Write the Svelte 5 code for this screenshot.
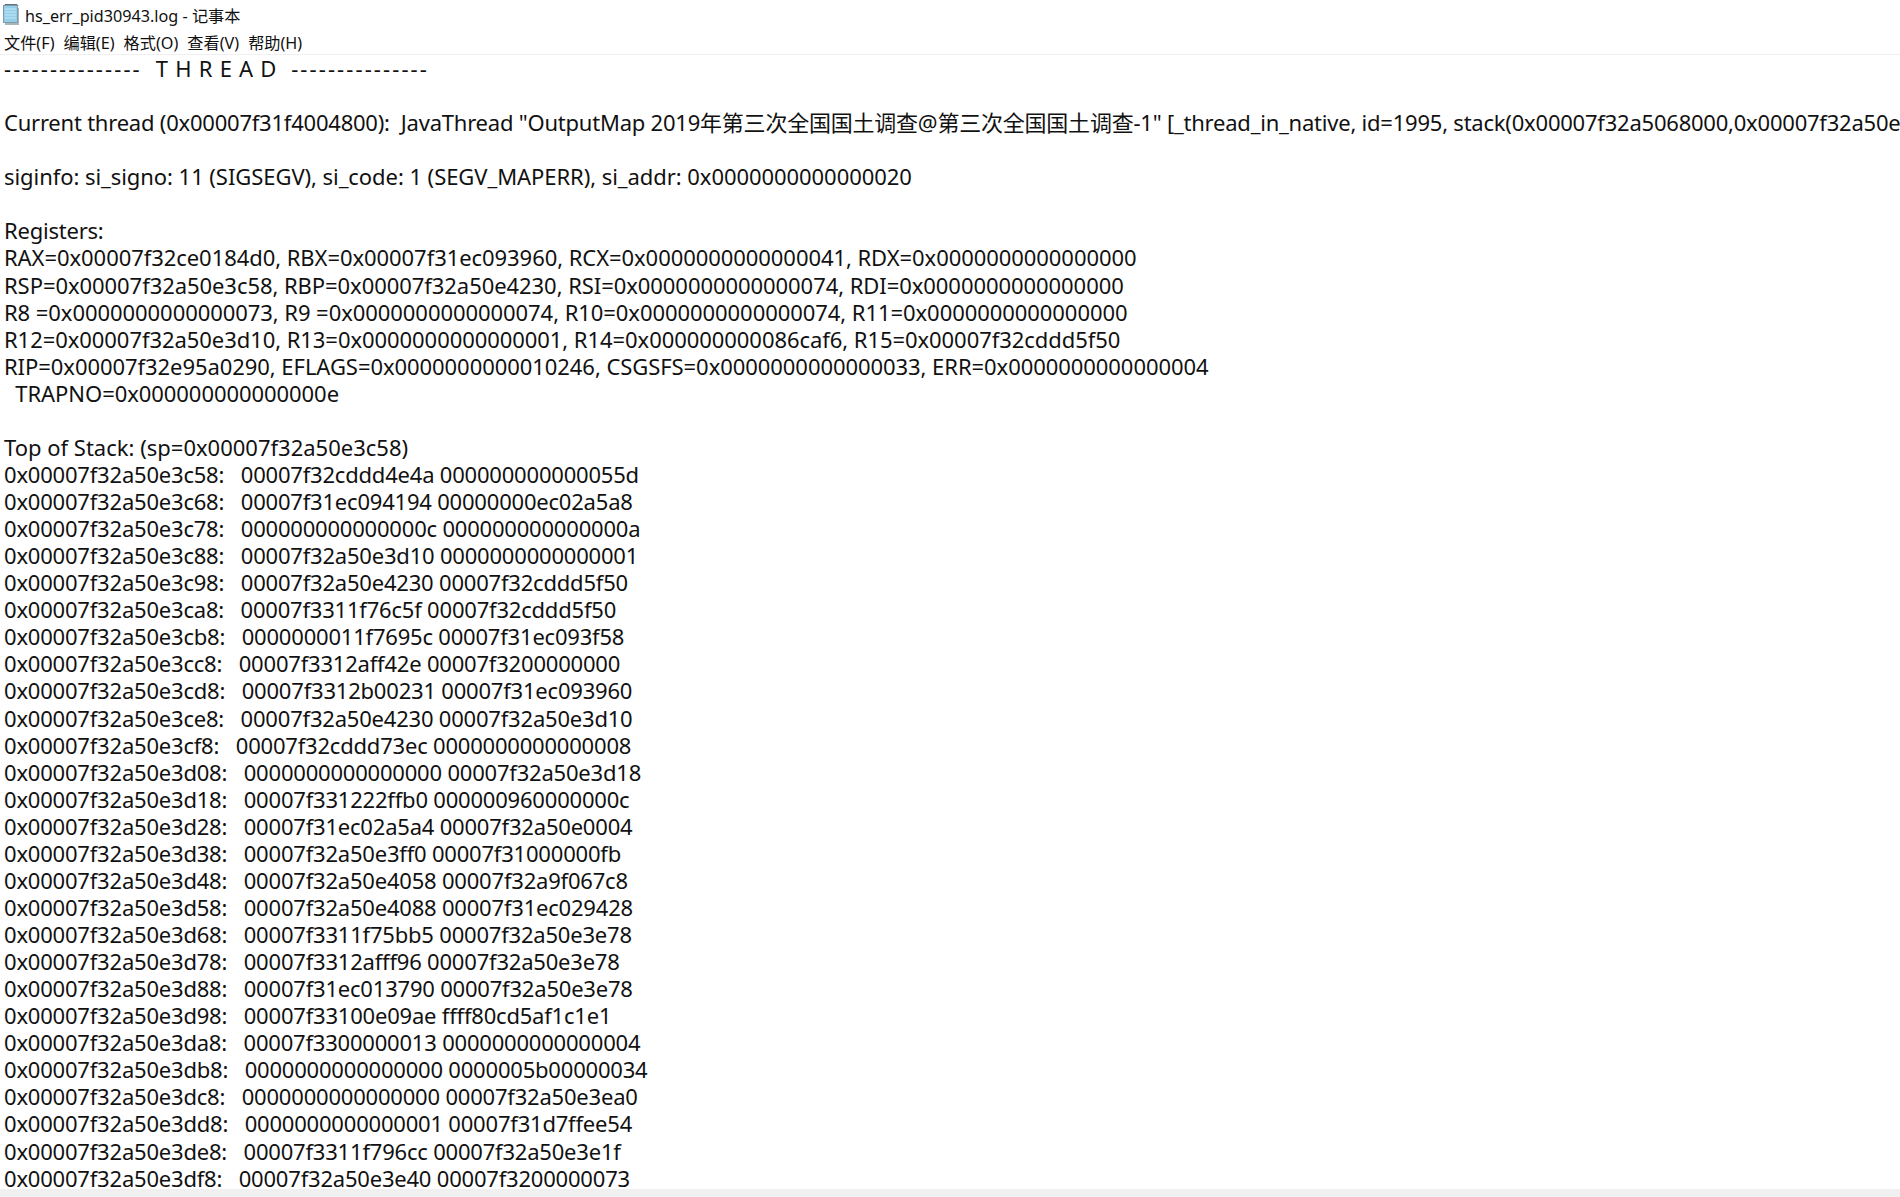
<script lang="ts">
    const registers = [
        'RAX=0x00007f32ce0184d0, RBX=0x00007f31ec093960, RCX=0x0000000000000041, RDX=0x0000000000000000',
        'RSP=0x00007f32a50e3c58, RBP=0x00007f32a50e4230, RSI=0x0000000000000074, RDI=0x0000000000000000',
        'R8 =0x0000000000000073, R9 =0x0000000000000074, R10=0x0000000000000074, R11=0x0000000000000000',
        'R12=0x00007f32a50e3d10, R13=0x0000000000000001, R14=0x000000000086caf6, R15=0x00007f32cddd5f50',
        'RIP=0x00007f32e95a0290, EFLAGS=0x0000000000010246, CSGSFS=0x0000000000000033, ERR=0x0000000000000004',
        '  TRAPNO=0x000000000000000e'
    ];

    const stack = [
        '0x00007f32a50e3c58:   00007f32cddd4e4a 000000000000055d',
        '0x00007f32a50e3c68:   00007f31ec094194 00000000ec02a5a8',
        '0x00007f32a50e3c78:   000000000000000c 000000000000000a',
        '0x00007f32a50e3c88:   00007f32a50e3d10 0000000000000001',
        '0x00007f32a50e3c98:   00007f32a50e4230 00007f32cddd5f50',
        '0x00007f32a50e3ca8:   00007f3311f76c5f 00007f32cddd5f50',
        '0x00007f32a50e3cb8:   0000000011f7695c 00007f31ec093f58',
        '0x00007f32a50e3cc8:   00007f3312aff42e 00007f3200000000',
        '0x00007f32a50e3cd8:   00007f3312b00231 00007f31ec093960',
        '0x00007f32a50e3ce8:   00007f32a50e4230 00007f32a50e3d10',
        '0x00007f32a50e3cf8:   00007f32cddd73ec 0000000000000008',
        '0x00007f32a50e3d08:   0000000000000000 00007f32a50e3d18',
        '0x00007f32a50e3d18:   00007f331222ffb0 000000960000000c',
        '0x00007f32a50e3d28:   00007f31ec02a5a4 00007f32a50e0004',
        '0x00007f32a50e3d38:   00007f32a50e3ff0 00007f31000000fb',
        '0x00007f32a50e3d48:   00007f32a50e4058 00007f32a9f067c8',
        '0x00007f32a50e3d58:   00007f32a50e4088 00007f31ec029428',
        '0x00007f32a50e3d68:   00007f3311f75bb5 00007f32a50e3e78',
        '0x00007f32a50e3d78:   00007f3312afff96 00007f32a50e3e78',
        '0x00007f32a50e3d88:   00007f31ec013790 00007f32a50e3e78',
        '0x00007f32a50e3d98:   00007f33100e09ae ffff80cd5af1c1e1',
        '0x00007f32a50e3da8:   00007f3300000013 0000000000000004',
        '0x00007f32a50e3db8:   0000000000000000 0000005b00000034',
        '0x00007f32a50e3dc8:   0000000000000000 00007f32a50e3ea0',
        '0x00007f32a50e3dd8:   0000000000000001 00007f31d7ffee54',
        '0x00007f32a50e3de8:   00007f3311f796cc 00007f32a50e3e1f',
        '0x00007f32a50e3df8:   00007f32a50e3e40 00007f3200000073'
    ];

    // text + class, the classes only tune the letter spacing per kind of line
    const lines = [
        { text: '', cls: '' },
        { text: 'Current thread (0x00007f31f4004800):  JavaThread "OutputMap 2019年第三次全国国土调查@第三次全国国土调查-1" [_thread_in_native, id=1995, stack(0x00007f32a5068000,0x00007f32a50e9000)]', cls: 'thread' },
        { text: '', cls: '' },
        { text: 'siginfo: si_signo: 11 (SIGSEGV), si_code: 1 (SEGV_MAPERR), si_addr: 0x0000000000000020', cls: 'info' },
        { text: '', cls: '' },
        { text: 'Registers:', cls: 'thread' },
        ...registers.map((text) => ({ text, cls: 'info' })),
        { text: '', cls: '' },
        { text: 'Top of Stack: (sp=0x00007f32a50e3c58)', cls: '' },
        ...stack.map((text) => ({ text, cls: 'stack' }))
    ];

    const menus = ['文件(F)', '编辑(E)', '格式(O)', '查看(V)', '帮助(H)'];
</script>

<div class="window">
    <div class="titlebar">
        <svg class="icon" width="18" height="22" viewBox="0 0 18 22">
            <rect x="3" y="4" width="14" height="17" fill="#a9b6bc"/>
            <rect x="1.5" y="1.5" width="14" height="17" fill="#93cfe8" stroke="#7f9aa8"/>
            <path d="M2 1.5l1-1 12 0 1 1" fill="none" stroke="#5d7480"/>
            <path d="M3 5h11M3 8h11M3 11h11M3 14h11" stroke="#c3e6f4"/>
        </svg>
        <span>hs_err_pid30943.log - 记事本</span>
    </div>
    <div class="menubar">
        {#each menus as menu}
            <span>{menu}</span>
        {/each}
    </div>
    <div class="editor">
        <div class="line heading">
            <span class="dashes">---------------</span>
            <span class="name">T H R E A D</span>
            <span class="dashes">---------------</span>
        </div>
        {#each lines as line}
            <div class="line {line.cls}">{line.text}</div>
        {/each}
    </div>
    <div class="scrollbar"></div>
</div>

<style>
    :global(body) {
        margin: 0;
        background: #fff;
    }

    .window {
        width: 1900px;
        height: 1197px;
        display: flex;
        flex-direction: column;
        overflow: hidden;
        color: #111;
        font-family: "Noto Sans", "Noto Sans CJK SC", sans-serif;
    }

    .titlebar {
        height: 30px;
        display: flex;
        align-items: center;
        gap: 5px;
        padding-left: 2px;
        font-size: 16.2px;
    }

    .icon {
        flex: none;
    }

    .menubar {
        height: 25px;
        display: flex;
        align-items: center;
        gap: 9px;
        padding-left: 4px;
        font-size: 16.2px;
        border-bottom: 1px solid #f0f0f0;
        box-sizing: border-box;
    }

    .editor {
        flex: 1;
        min-height: 0;
        overflow: hidden;
        padding-left: 4px;
        font-size: 22px;
    }

    .line {
        height: 27.07px;
        line-height: 27.07px;
        white-space: pre;
    }

    .heading {
        display: flex;
        gap: 14px;
    }

    .dashes {
        letter-spacing: 2.1px;
    }

    .name {
        letter-spacing: 0.75px;
    }

    .thread {
        letter-spacing: -0.22px;
    }

    .info {
        letter-spacing: -0.06px;
    }

    .stack {
        letter-spacing: -0.2px;
    }

    .scrollbar {
        height: 8px;
        flex: none;
        background: #f0f0f0;
    }
</style>
